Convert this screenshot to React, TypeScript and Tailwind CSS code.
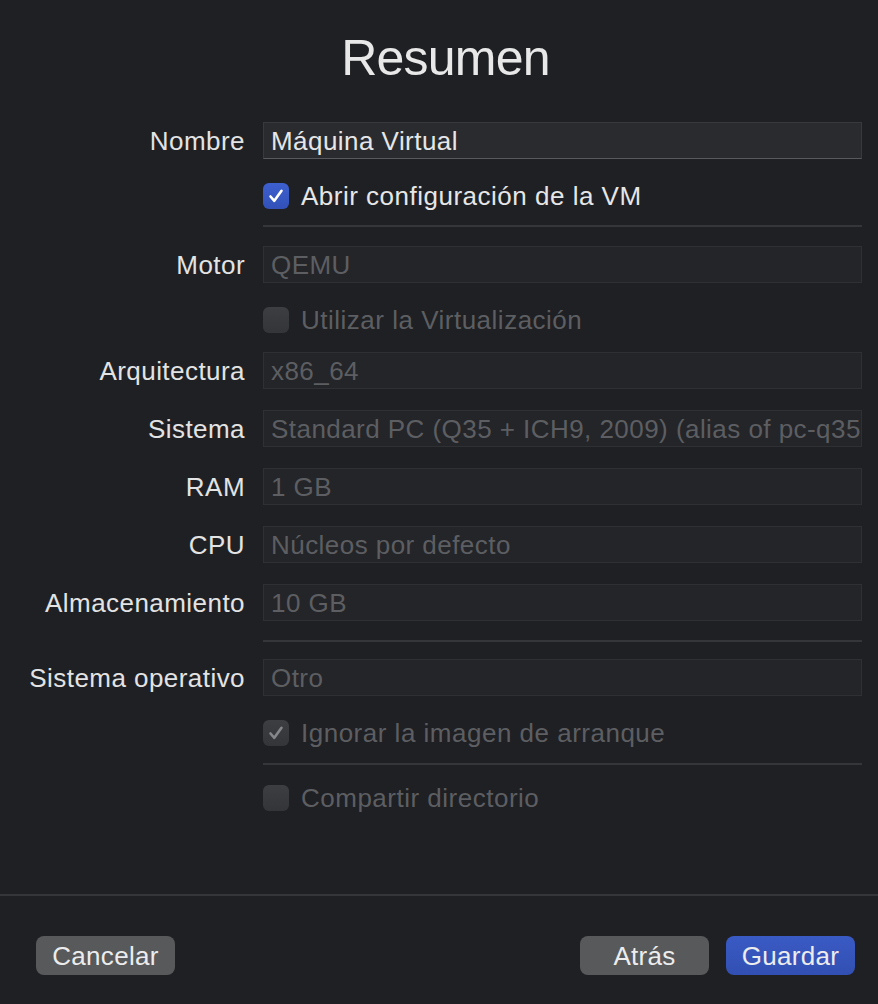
import React from 'react'

const font = { fontFamily: '"Liberation Sans", Arial, sans-serif' }

function Check({ checked, disabled }: { checked?: boolean; disabled?: boolean }) {
  const box = disabled
    ? 'bg-gradient-to-b from-[#3d3e41] to-[#343538]'
    : checked
    ? 'bg-gradient-to-b from-[#3d60cf] to-[#3250b8]'
    : 'bg-[#3a3b3e]'
  return (
    <div className={`w-[26px] h-[26px] rounded-[6px] flex items-center justify-center shrink-0 ${box}`}>
      {checked && (
        <svg width="18" height="18" viewBox="0 0 18 18" fill="none">
          <path
            d="M3.5 9.5 L7.3 13.8 L14.5 3.8"
            stroke={disabled ? '#85868a' : '#ffffff'}
            strokeWidth="2.6"
            strokeLinecap="round"
            strokeLinejoin="round"
          />
        </svg>
      )}
    </div>
  )
}

function Field({ label, value, active }: { label: string; value: string; active?: boolean }) {
  return (
    <div className="flex items-center h-[37px]">
      <div className="w-[245px] text-right text-[26px] leading-[30px] tracking-[0.45px] text-[#e3e3e4] whitespace-nowrap">
        {label}
      </div>
      <div
        className={`ml-[18px] flex-1 h-[37px] flex items-center px-[7px] overflow-hidden whitespace-nowrap text-[26px] leading-[30px] tracking-[0.45px] ${
          active
            ? 'bg-[#2a2b2e] border border-[#38393c] border-b-[#58595c] text-[#e6e6e7]'
            : 'bg-[#242528] border border-[#2f3033] text-[#5d5e62]'
        }`}
      >
        {value}
      </div>
    </div>
  )
}

function CheckRow({ label, checked, disabled }: { label: string; checked?: boolean; disabled?: boolean }) {
  return (
    <div className="flex items-center h-[37px] pl-[263px]">
      <Check checked={checked} disabled={disabled} />
      <span
        className={`ml-[12px] text-[26px] leading-[30px] tracking-[0.5px] whitespace-nowrap ${
          disabled ? 'text-[#5d5e62]' : 'text-[#e6e6e7]'
        }`}
      >
        {label}
      </span>
    </div>
  )
}

function Sep() {
  return <div className="ml-[263px] h-[2px] bg-[#353639]" />
}

export default function App() {
  return (
    <div className="w-[878px] h-[1004px] bg-[#1f2023] flex flex-col overflow-hidden" style={font}>
      <div className="flex-1 pr-[16px]">
        <h1 className="mt-[33px] leading-[50px] text-center text-[50px] tracking-[-0.8px] text-[#e8e8e9] pl-[29px]">
          Resumen
        </h1>
        <div className="mt-[39px]">
          <Field label="Nombre" value="Máquina Virtual" active />
        </div>
        <div className="mt-[18px]">
          <CheckRow label="Abrir configuración de la VM" checked />
        </div>
        <div className="mt-[11px]">
          <Sep />
        </div>
        <div className="mt-[19px]">
          <Field label="Motor" value="QEMU" />
        </div>
        <div className="mt-[18px]">
          <CheckRow label="Utilizar la Virtualización" disabled />
        </div>
        <div className="mt-[14px] flex flex-col gap-[21px]">
          <Field label="Arquitectura" value="x86_64" />
          <Field label="Sistema" value="Standard PC (Q35 + ICH9, 2009) (alias of pc-q35-7.0)" />
          <Field label="RAM" value="1 GB" />
          <Field label="CPU" value="Núcleos por defecto" />
          <Field label="Almacenamiento" value="10 GB" />
        </div>
        <div className="mt-[19px]">
          <Sep />
        </div>
        <div className="mt-[17px]">
          <Field label="Sistema operativo" value="Otro" />
        </div>
        <div className="mt-[18px]">
          <CheckRow label="Ignorar la imagen de arranque" checked disabled />
        </div>
        <div className="mt-[12px]">
          <Sep />
        </div>
        <div className="mt-[14px]">
          <CheckRow label="Compartir directorio" disabled />
        </div>
      </div>
      <div className="h-[2px] bg-[#353639]" />
      <div className="flex items-center justify-between pt-[40px] pb-[29px] pl-[36px] pr-[23px]">
        <button className="w-[139px] h-[39px] rounded-[8px] bg-[#58595b] text-[26px] leading-[30px] tracking-[0.3px] text-[#ececed]">
          Cancelar
        </button>
        <div className="flex gap-[17px]">
          <button className="w-[129px] h-[39px] rounded-[8px] bg-[#58595b] text-[26px] leading-[30px] tracking-[0.3px] text-[#ececed]">
            Atrás
          </button>
          <button className="w-[129px] h-[39px] rounded-[8px] bg-gradient-to-b from-[#3a5ac4] to-[#3250b3] text-[26px] leading-[30px] tracking-[0.3px] text-[#ececed]">
            Guardar
          </button>
        </div>
      </div>
    </div>
  )
}
